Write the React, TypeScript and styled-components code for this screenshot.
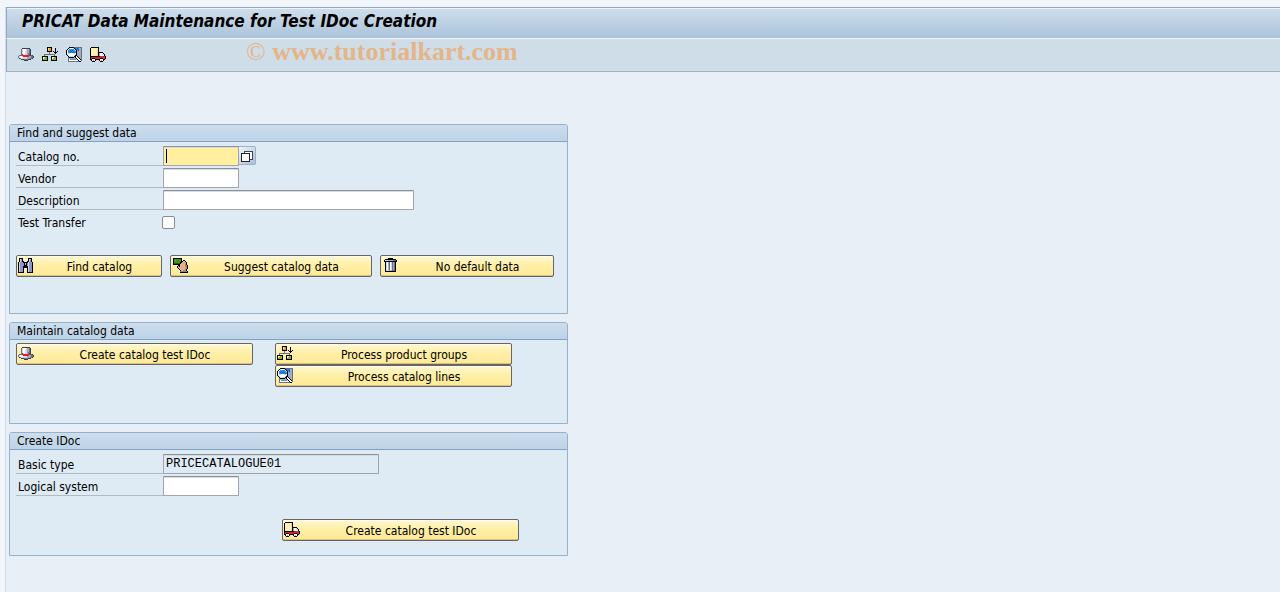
import React from "react";
import styled, { createGlobalStyle } from "styled-components";

const GlobalStyle = createGlobalStyle`
  * { box-sizing: border-box; }
  html, body, #root { min-height: 100vh; }
  body {
    margin: 0;
    background: #f2f5fa;
    color: #000;
    font: 12px/16px "DejaVu Sans Condensed", "DejaVu Sans", Tahoma, sans-serif;
  }
  #root { display: flex; }
`;

/* Icons are drawn on a 16-column grid, one character per pixel. */
const palette: Record<string, string> = {
  k: "#000000", w: "#ffffff", g: "#d4d8e4", G: "#a3abc0", D: "#68708c",
  r: "#e0202c", R: "#98001c", o: "#ff9c00", y: "#fff0b0", Y: "#f0d890",
  l: "#86b423", n: "#3c9a10", N: "#206010", b: "#2896f0", B: "#1460c0",
  c: "#b8e0ff", v: "#8c94cc", s: "#e8b088", S: "#c08460", t: "#7090a0",
  d: "#3c4050",
};

const icons = {
  hat: [
    "................",
    "....dddddddd....",
    "...DgwwwgGGDd...",
    "...DgwwwgGGDd...",
    "...DgwwggGGDd...",
    "...DgwwggGGDd...",
    "...DgwwggGDDd...",
    "...DrgwggGDrd...",
    ".DDDrrrrrrrrdDd.",
    "DgwwgrrrrrrGGDDd",
    "DgwwwggggGGGGDDd",
    ".dDggggggGGGDDd.",
    "...dddDDDDddd...",
    "......dddd......",
    "................",
  ],
  groups: [
    ".....kkkkk......",
    ".....kyook...k..",
    ".....kyook...k..",
    ".....koook...k..",
    ".....kkkkk.k.k.k",
    ".......D....kkk.",
    ".......D.....k..",
    "..DDDDDDDDDDD...",
    "..D.........D...",
    "kkkkkk...kkkkkk.",
    "kyyllk...kyyllk.",
    "kylllk...kylllk.",
    "kllllk...kllllk.",
    "kkkkkk...kkkkkk.",
    "................",
  ],
  lines: [
    "...kkkkkDDDDDDDD",
    "..kcwwwckBbBbGGD",
    ".kwbbbbbckBbBGGD",
    "kwbbBbBbbckbBGGD",
    "kwbBbBbBbbkGGGGD",
    "kwbbBbBbBbkGGGGD",
    "kwggwwwggwkGGGGD",
    "kcwwwwwwwckGGGGD",
    ".kcwwwwwckkGGGGD",
    "..kccccckkwkGGGD",
    "..DkkkkkGkwwkGGD",
    "..DGGGGGGGkwwkGD",
    "..DwttttttgkwwkD",
    "..DwwwwwwwwwkwwD",
    "..DDDDDDDDDDDkk.",
  ],
  truck: [
    ".kkkkkkkk.......",
    "kyyyyyyyk.......",
    "kyyyyyyYk.......",
    "kyyyyyyYk.......",
    "kyyyyyyYk.......",
    "kyyyyyyYkkkkk...",
    "kyyyyyyYkGwwck..",
    "kyyyyyyYkGwwcck.",
    "kyyyyyyYkGwwwwk.",
    "kkkkkkkkkkrrrrrk",
    "krrrrrrrrrrrrrrk",
    "krkkkrrrrrkkkrrk",
    "kkwwwkkkkkwwwkk.",
    ".kwGwk...kwGwk..",
    "..kkk.....kkk...",
  ],
  binoculars: [
    ".kkkk.....kkkk..",
    ".kgvk.....kgvk..",
    ".kgvk.....kgvk..",
    ".kgvkk...kkgvk..",
    "kgvvvkkkkkgvvvk.",
    "kgvvvvkgkvgvvvk.",
    "kgvvvvkvkvgvvvk.",
    "kgvvvvkkkvgvvvk.",
    "kgvvvkkkkkgvvvk.",
    "kgvvvkkkkkgvvvk.",
    "kgvvvk...kgvvvk.",
    "kgvvvk...kgvvvk.",
    "kgvvvk...kgvvvk.",
    "kgvvvk...kgvvvk.",
    "kkkkkk...kkkkkk.",
  ],
  suggest: [
    ".kkkkkkkkk......",
    ".knnnnnnnk......",
    ".knlnnnnnk.kk...",
    ".knnnnnnnkkssk..",
    ".knnnnnnkkssssk.",
    ".kNNNNNNkssssSk.",
    ".kkkkkkksssssSk.",
    "......kksssssSSk",
    ".....ksksssssSSk",
    ".....kssssssssSk",
    "......kssssssSSk",
    ".......ksssssSk.",
    "........kssSSSk.",
    "........tttttttk",
    "........kkkkkkkk",
  ],
  trash: [
    "......kkkkk.....",
    "...kkkkkkkkkkk..",
    "..kwggGGGGGDDDk.",
    "..kkkkkkkkkkkkk.",
    "...kgwGDwgDGDk..",
    "...kgwGDwgDGDk..",
    "...kgwGDwgDGDk..",
    "...kgwGDwgDGDk..",
    "...kgwGDwgDGDk..",
    "...kgwGDwgDGDk..",
    "...kgwGDwgDGDk..",
    "...kgwGDwgDGDk..",
    "...kgggGGGDDDk..",
    "...kkkkkkkkkkk..",
    "................",
  ],
};

type IconName = keyof typeof icons;

const Glyph = styled.svg`
  display: block;
  flex: none;
  width: 16px;
  height: 15px;
`;

function Icon({ name }: { name: IconName }) {
  return (
    <Glyph viewBox="0 0 16 15" shapeRendering="crispEdges" aria-hidden="true">
      {icons[name].flatMap((row, y) =>
        row.split("").map((c, x) =>
          c === "." ? null : (
            <rect key={`${x}-${y}`} x={x} y={y} width="1" height="1" fill={palette[c]} />
          )
        )
      )}
    </Glyph>
  );
}

const Window = styled.div`
  flex: 1;
  margin: 7px 0 0 5px;
  border-left: 1px solid #d3dce8;
  background: #e8eff7;
`;

const TitleBar = styled.header`
  height: 31px;
  padding: 0 15px;
  border-top: 1px solid #94a9c1;
  border-left: 1px solid #94a9c1;
  box-shadow: inset 0 1px #eef4fa;
  background: linear-gradient(#cfdeec, #abc3da);
  display: flex;
  align-items: center;
`;

const Title = styled.h1`
  margin: 0 0 4px;
  font-size: 17px;
  line-height: 20px;
  font-weight: bold;
  font-style: italic;
  white-space: nowrap;
`;

const Toolbar = styled.div`
  height: 34px;
  padding: 0 11px 2px;
  border-top: 1px solid #eef4fa;
  border-left: 1px solid #94a9c1;
  border-bottom: 1px solid #9db2c8;
  background: #cfdde8;
  display: flex;
  align-items: center;
  gap: 8px;
`;

const ToolButton = styled.button`
  width: 16px;
  height: 16px;
  padding: 0;
  border: 0;
  background: none;
`;

const Watermark = styled.span`
  margin-left: 132px;
  color: #e3b589;
  font: bold 26px/34px "Liberation Serif", serif;
  white-space: nowrap;
  align-self: flex-end;
`;

const CopyMark = styled.span`
  font-weight: normal;
`;

const Content = styled.main`
  max-width: 562px;
  padding: 52px 0 36px 3px;
  display: flex;
  flex-direction: column;
  gap: 8px;
`;

const Panel = styled.section`
  border: 1px solid #94b1ce;
  border-radius: 3px 3px 0 0;
  background: #deeaf4;
`;

const PanelTitle = styled.h2`
  margin: 0;
  height: 17px;
  padding: 0 7px;
  border-bottom: 1px solid #84a2c4;
  border-radius: 2px 2px 0 0;
  background: linear-gradient(#cdddec, #bdd3e8);
  font-size: 12px;
  line-height: 16px;
  font-weight: normal;
`;

const PanelBody = styled.div<{ $top?: number; $bottom: number }>`
  padding: ${(p) => p.$top ?? 4}px 6px ${(p) => p.$bottom}px;
`;

const Fields = styled.div`
  display: grid;
  gap: 2px;
`;

const Field = styled.div`
  height: 20px;
  display: flex;
`;

const Label = styled.label<{ $plain?: boolean }>`
  width: 147px;
  padding: 3px 2px 0;
  border-bottom: 1px solid ${(p) => (p.$plain ? "transparent" : "#b3bac1")};
`;

const TextInput = styled.input<{ $width: number }>`
  width: ${(p) => p.$width}px;
  height: 20px;
  padding: 0 2px;
  border: 1px solid #a2a6ac;
  border-top-color: #8c9196;
  border-radius: 1px;
  box-shadow: inset 0 1px #d8dbdf;
  background: #fff;
  color: #000;
  caret-color: transparent;
  font: 12px/16px "Liberation Mono", monospace;
  outline: none;

  &:read-only { background: #deeaf4; }
`;

const ActiveBox = styled.div`
  position: relative;
  display: flex;

  ${TextInput} { background: #ffef9e; }
`;

const Caret = styled.span`
  position: absolute;
  left: 3px;
  top: 3px;
  width: 1px;
  height: 14px;
  background: #000040;
`;

const HelpButton = styled.button`
  width: 17px;
  height: 19px;
  padding: 2px;
  border: 1px solid #9fb0c4;
  border-left: 0;
  border-radius: 0 2px 2px 0;
  background: linear-gradient(135deg, #f0f5fb, #a9bfdb);

  svg { display: block; }
`;

const Checkbox = styled.input`
  appearance: none;
  width: 13px;
  height: 13px;
  margin: 4px 0 0 -1px;
  border: 1px solid #8a8e92;
  border-radius: 2px;
  background: #fff;
`;

const Actions = styled.div<{ $top?: number; $left?: number; $gap?: number }>`
  display: flex;
  align-items: flex-start;
  gap: ${(p) => p.$gap ?? 8}px;
  padding: ${(p) => p.$top ?? 0}px 0 0 ${(p) => p.$left ?? 0}px;
`;

const Stack = styled.div`
  display: flex;
  flex-direction: column;
`;

const Button = styled.button<{ $width: number }>`
  width: ${(p) => p.$width}px;
  height: 22px;
  padding: 2px 1px 0;
  border: 1px solid #66666a;
  border-radius: 2px;
  box-shadow: inset 0 -1px #d8c07c, inset 0 1px #fffbe6;
  background: linear-gradient(#fff8d4, #ffefa6 45%, #fee998);
  color: #000;
  font: inherit;
  display: flex;
  align-items: flex-start;
`;

const ButtonText = styled.span`
  flex: 1;
  padding: 1px 0 0 5px;
  text-align: center;
  white-space: nowrap;
`;

function ActionButton({ icon, width, children }: { icon: IconName; width: number; children: string }) {
  return (
    <Button type="button" $width={width}>
      <Icon name={icon} />
      <ButtonText>{children}</ButtonText>
    </Button>
  );
}

export default function App() {
  return (
    <>
      <GlobalStyle />
      <Window>
        <TitleBar>
          <Title>PRICAT Data Maintenance for Test IDoc Creation</Title>
        </TitleBar>
        <Toolbar>
          <ToolButton type="button" aria-label="Create catalog test IDoc"><Icon name="hat" /></ToolButton>
          <ToolButton type="button" aria-label="Process product groups"><Icon name="groups" /></ToolButton>
          <ToolButton type="button" aria-label="Process catalog lines"><Icon name="lines" /></ToolButton>
          <ToolButton type="button" aria-label="Create IDoc"><Icon name="truck" /></ToolButton>
          <Watermark><CopyMark>©</CopyMark> www.tutorialkart.com</Watermark>
        </Toolbar>
        <Content>
          <Panel>
            <PanelTitle>Find and suggest data</PanelTitle>
            <PanelBody $bottom={36}>
              <Fields>
                <Field>
                  <Label htmlFor="catalog">Catalog no.</Label>
                  <ActiveBox>
                    <TextInput id="catalog" $width={76} />
                    <Caret />
                    <HelpButton type="button" aria-label="Search catalog numbers">
                      <svg width="12" height="12" viewBox="0 0 12 12" shapeRendering="crispEdges">
                        <path d="M3.5 1.5h8v8h-8z" fill="#fff" stroke="#444" />
                        <path d="M0.5 3.5h8v8h-8z" fill="#fff" stroke="#222" />
                      </svg>
                    </HelpButton>
                  </ActiveBox>
                </Field>
                <Field>
                  <Label htmlFor="vendor">Vendor</Label>
                  <TextInput id="vendor" $width={76} />
                </Field>
                <Field>
                  <Label htmlFor="description">Description</Label>
                  <TextInput id="description" $width={251} />
                </Field>
                <Field>
                  <Label htmlFor="test" $plain>Test Transfer</Label>
                  <Checkbox id="test" type="checkbox" />
                </Field>
              </Fields>
              <Actions $top={23}>
                <ActionButton icon="binoculars" width={146}>Find catalog</ActionButton>
                <ActionButton icon="suggest" width={202}>Suggest catalog data</ActionButton>
                <ActionButton icon="trash" width={174}>No default data</ActionButton>
              </Actions>
            </PanelBody>
          </Panel>
          <Panel>
            <PanelTitle>Maintain catalog data</PanelTitle>
            <PanelBody $top={3} $bottom={36}>
              <Actions $gap={22}>
                <ActionButton icon="hat" width={237}>Create catalog test IDoc</ActionButton>
                <Stack>
                  <ActionButton icon="groups" width={237}>Process product groups</ActionButton>
                  <ActionButton icon="lines" width={237}>Process catalog lines</ActionButton>
                </Stack>
              </Actions>
            </PanelBody>
          </Panel>
          <Panel>
            <PanelTitle>Create IDoc</PanelTitle>
            <PanelBody $bottom={14}>
              <Fields>
                <Field>
                  <Label htmlFor="basic">Basic type</Label>
                  <TextInput id="basic" $width={216} defaultValue="PRICECATALOGUE01" readOnly />
                </Field>
                <Field>
                  <Label htmlFor="logical">Logical system</Label>
                  <TextInput id="logical" $width={76} />
                </Field>
              </Fields>
              <Actions $top={23} $left={266}>
                <ActionButton icon="truck" width={237}>Create catalog test IDoc</ActionButton>
              </Actions>
            </PanelBody>
          </Panel>
        </Content>
      </Window>
    </>
  );
}
